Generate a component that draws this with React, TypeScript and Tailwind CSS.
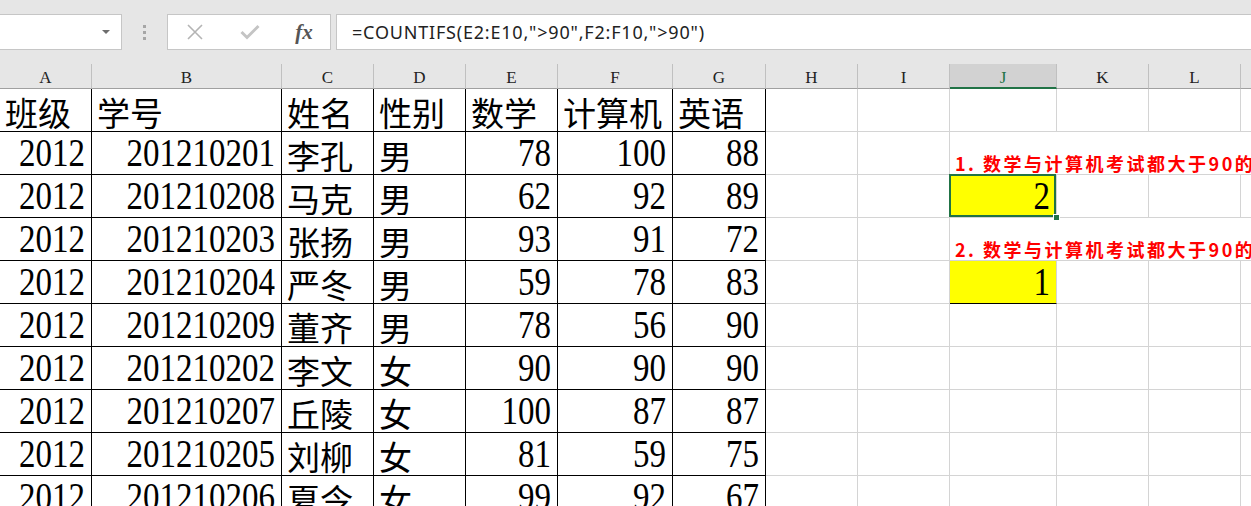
import React from 'react'

const COLS = ['A', 'B', 'C', 'D', 'E', 'F', 'G', 'H', 'I', 'J', 'K', 'L', 'M']

const HEAD = ['班级', '学号', '姓名', '性别', '数学', '计算机', '英语']

const ROWS: [string, string, string, string, string, string, string][] = [
  ['2012', '201210201', '李孔', '男', '78', '100', '88'],
  ['2012', '201210208', '马克', '男', '62', '92', '89'],
  ['2012', '201210203', '张扬', '男', '93', '91', '72'],
  ['2012', '201210204', '严冬', '男', '59', '78', '83'],
  ['2012', '201210209', '董齐', '男', '78', '56', '90'],
  ['2012', '201210202', '李文', '女', '90', '90', '90'],
  ['2012', '201210207', '丘陵', '女', '100', '87', '87'],
  ['2012', '201210205', '刘柳', '女', '81', '59', '75'],
  ['2012', '201210206', '夏令', '女', '99', '92', '67'],
]

const gridCols =
  'grid grid-cols-[92px_190px_92px_92px_92px_115px_93px_92px_92px_107px_92px_92px_92px]'

function Toolbar() {
  return (
    <div className="flex h-[64px] items-center bg-[#e6e6e6]">
      <div className="ml-[-1px] flex h-[36px] w-[123px] items-center justify-end border border-[#c6c6c6] bg-white pr-[11px]">
        <div className="h-0 w-0 border-x-[4px] border-t-[4px] border-x-transparent border-t-[#6d6d6d]" />
      </div>
      <div className="flex w-[45px] flex-col items-center gap-[3px]">
        <div className="h-[3px] w-[3px] bg-[#a6a6a6]" />
        <div className="h-[3px] w-[3px] bg-[#a6a6a6]" />
        <div className="h-[3px] w-[3px] bg-[#a6a6a6]" />
      </div>
      <div className="flex h-[36px] w-[164px] items-center border border-[#c6c6c6] bg-white">
        <div className="flex w-[54px] justify-center">
          <svg width="18" height="18" viewBox="0 0 18 18">
            <path d="M2 2L16 16M16 2L2 16" stroke="#b4b4b4" strokeWidth="1.6" fill="none" />
          </svg>
        </div>
        <div className="flex w-[56px] justify-center">
          <svg width="20" height="16" viewBox="0 0 20 16">
            <path d="M1.5 8L7 13.5L18.5 2" stroke="#c4c4c4" strokeWidth="3" fill="none" />
          </svg>
        </div>
        <div className="flex w-[52px] justify-center">
          <span className="font-['Liberation_Serif',serif] text-[21px] font-bold italic leading-none text-[#555]">
            fx
          </span>
        </div>
      </div>
      <div className="ml-[5px] flex h-[36px] flex-1 items-center border border-r-0 border-[#c6c6c6] bg-white pl-[15px]">
        <span className="font-['Noto_Sans',sans-serif] text-[18px] leading-none tracking-[0.8px] text-[#222]">
          =COUNTIFS(E2:E10,"&gt;90",F2:F10,"&gt;90")
        </span>
      </div>
    </div>
  )
}

function ColumnHeaders() {
  return (
    <div className={`${gridCols} h-[25px] bg-[#e6e6e6]`}>
      {COLS.map((c) => {
        const active = c === 'J'
        return (
          <div
            key={c}
            className={
              active
                ? 'flex items-end justify-center border-r border-b-2 border-r-[#c0c0c0] border-b-[#217346] bg-[#d2d2d2] pb-[1px]'
                : 'flex items-end justify-center border-r border-b border-r-[#c0c0c0] border-b-[#a0a0a0] pb-[2px]'
            }
          >
            <span
              className={`font-['Liberation_Serif',serif] text-[17px] leading-none ${
                active ? 'text-[#217346]' : 'text-[#222]'
              }`}
            >
              {c}
            </span>
          </div>
        )
      })}
    </div>
  )
}

function Cell({
  children,
  black,
  num,
  className = '',
}: {
  children?: React.ReactNode
  black?: boolean
  num?: boolean
  className?: string
}) {
  return (
    <div
      className={`flex h-[43px] items-end overflow-hidden border-r border-b whitespace-nowrap ${
        black ? 'border-black' : 'border-[#d4d4d4]'
      } ${num ? 'justify-end pr-[6px] pb-[1px]' : 'justify-start pl-[5px] pb-[2px]'} ${className}`}
    >
      {num ? (
        <span className="inline-block origin-bottom scale-y-[1.2] font-['Liberation_Serif',serif] text-[33px] leading-none text-black">
          {children}
        </span>
      ) : (
        <span className="font-['Noto_Sans_CJK_SC',sans-serif] text-[33px] leading-none text-black">
          {children}
        </span>
      )}
    </div>
  )
}

function Empty({ className = '' }: { className?: string }) {
  return <div className={`h-[43px] border-r border-b border-[#d4d4d4] ${className}`} />
}

function Note({ children }: { children: React.ReactNode }) {
  return (
    <div className="col-span-4 flex h-[43px] items-end border-b border-[#d4d4d4] pb-[2px] pl-[5px] whitespace-nowrap">
      <span className="font-['Noto_Sans_CJK_SC',sans-serif] text-[18px] font-bold leading-none tracking-[2.5px] text-[#ff0000]">
        {children}
      </span>
    </div>
  )
}

function Answer({ value, selected }: { value: string; selected?: boolean }) {
  return (
    <div
      className={`relative flex h-[43px] items-end justify-end border-r border-b bg-[#ffff00] pr-[6px] pb-[1px] ${
        selected ? 'border-[#d4d4d4]' : 'border-r-[#d4d4d4] border-b-black'
      }`}
    >
      <span className="inline-block origin-bottom scale-y-[1.2] font-['Liberation_Serif',serif] text-[33px] leading-none text-black">
        {value}
      </span>
      {selected && (
        <>
          <div className="pointer-events-none absolute -top-[1px] -left-[1px] right-0 bottom-0 border-2 border-[#217346]" />
          <div className="absolute -right-[4px] -bottom-[4px] h-[7px] w-[7px] border border-white bg-[#217346]" />
        </>
      )}
    </div>
  )
}

function SideCells({ row }: { row: number }) {
  // columns H..M for a given row index (0 = header row of the table)
  const h = (
    <>
      <Empty />
      <Empty />
    </>
  )
  if (row === 1)
    return (
      <>
        {h}
        <Note>1. 数学与计算机考试都大于90的</Note>
      </>
    )
  if (row === 3)
    return (
      <>
        {h}
        <Note>2. 数学与计算机考试都大于90的</Note>
      </>
    )
  if (row === 2 || row === 4)
    return (
      <>
        {h}
        <Answer value={row === 2 ? '2' : '1'} selected={row === 2} />
        <Empty />
        <Empty />
        <Empty />
      </>
    )
  return (
    <>
      {h}
      <Empty />
      <Empty />
      <Empty />
      <Empty />
    </>
  )
}

export default function App() {
  return (
    <div className="h-[506px] w-[1251px] overflow-hidden bg-white">
      <Toolbar />
      <ColumnHeaders />
      <div className={gridCols}>
        {HEAD.map((t) => (
          <Cell key={t} black>
            {t}
          </Cell>
        ))}
        <SideCells row={0} />
        {ROWS.map((r, i) => (
          <React.Fragment key={i}>
            <Cell black num>
              {r[0]}
            </Cell>
            <Cell black num>
              {r[1]}
            </Cell>
            <Cell black>{r[2]}</Cell>
            <Cell black>{r[3]}</Cell>
            <Cell black num>
              {r[4]}
            </Cell>
            <Cell black num>
              {r[5]}
            </Cell>
            <Cell black num>
              {r[6]}
            </Cell>
            <SideCells row={i + 1} />
          </React.Fragment>
        ))}
      </div>
    </div>
  )
}
